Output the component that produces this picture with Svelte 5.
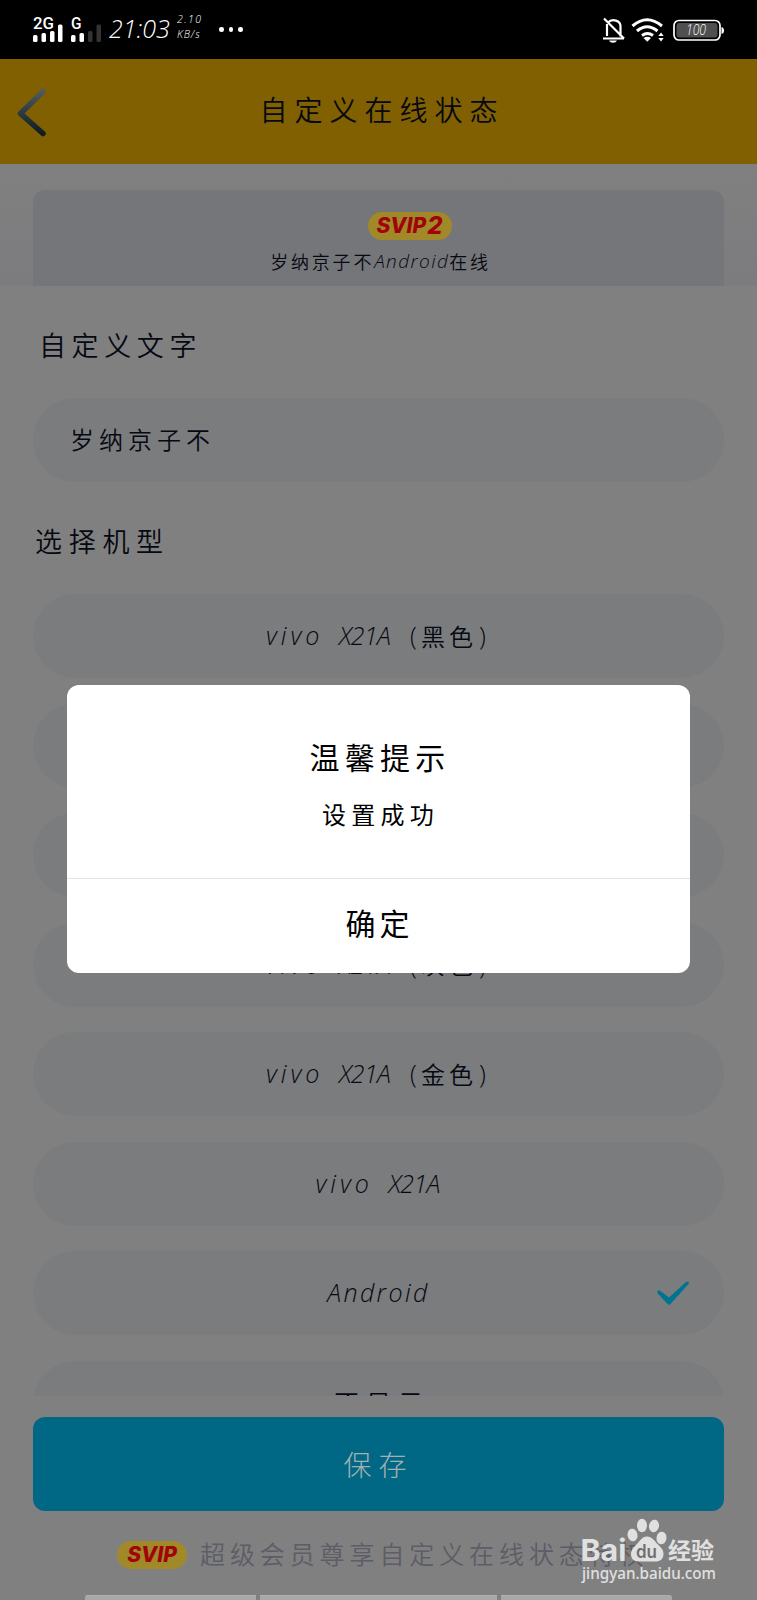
<script>
  const models = [
    { name: 'vivo X21A', color: '黑色' },
    { name: 'vivo X21A' , hidden: true },
    { name: 'vivo X21A' , hidden: true },
    { name: 'vivo X21A', color: '灰色' },
    { name: 'vivo X21A', color: '金色' },
    { name: 'vivo X21A' },
    { name: 'Android', checked: true },
    { label: '不显示' }
  ];
</script>

<div class="screen">
  <div class="status">
    <svg class="signals" width="72" height="28" viewBox="0 0 72 28">
      <g fill="#fff" font-family="Roboto" font-weight="500" font-size="16" font-style="normal">
        <text x="0" y="13" textLength="21" lengthAdjust="spacingAndGlyphs">2G</text>
        <text x="38" y="13" textLength="10.5" lengthAdjust="spacingAndGlyphs">G</text>
        <rect x="0" y="19" width="4.5" height="7" rx="1.5" />
        <rect x="8.5" y="17" width="4.5" height="9" rx="1.5" />
        <rect x="17" y="15" width="4.5" height="11" rx="1.5" />
        <rect x="25" y="8.5" width="4.5" height="17.5" rx="1.5" />
        <rect x="38" y="19" width="4.5" height="7" rx="1.5" />
        <rect x="46.500" y="17" width="4.500" height="9" rx="1.5" />
      </g>
      <rect x="55" y="15" width="4.500" height="11" rx="1.5" fill="#333" />
      <rect x="63.500" y="8.5" width="4.500" height="17.500" rx="1.5" fill="#333" />
    </svg>
    <span class="clock">21:03</span>
    <span class="speed"><span>2.10</span><span>KB/s</span></span>
    <span class="dots"><i></i><i></i><i></i></span>
    <svg class="right-icons" width="124" height="28" viewBox="602 15 124 28" fill="none" stroke="#fff">
      <path d="M608 21.500a7 6 0 0 1 12.500 4v10M607 23v12M603 37.500h21M604 17.500l20 20" stroke-width="2.200" />
      <path d="M609 39.500h8q-1 2.200-4 2.200t-4-2.200z" fill="#fff" stroke="none" />
      <path d="M632.500 25q14.500-12.500 29.500 0M637 30q10-8.500 20.500 0M642 34.500q5.500-4 11 0" stroke-width="3" />
      <path d="M643.500 37q4-2.500 7.500 0l-3.700 3.700z" fill="#fff" stroke="none" />
      <path d="M658.300 35l2.700-3.500 2.700 3.500zM658.300 37h5.400l-2.700 3.500z" fill="#fff" stroke="none" />
      <rect x="674" y="19.500" width="46" height="19.500" rx="5" stroke-width="1.700" />
      <rect x="676.500" y="22" width="41" height="14.500" rx="3" fill="#505050" stroke="none" />
      <path d="M721.500 26q2.500.5 2.500 3.500t-2.500 3.500z" fill="#fff" stroke="none" />
      <text x="686" y="33.500" fill="#fff" stroke="none" font-family="Open Sans" font-style="italic" font-size="14" textLength="20" lengthAdjust="spacingAndGlyphs">100</text>
    </svg>
  </div>

  <header>
    <svg class="back" width="32" height="50" viewBox="0 0 32 50" fill="none">
      <defs>
        <linearGradient id="chev" x1="0" y1="0" x2="0" y2="1">
          <stop offset="0" stop-color="#525a5b" />
          <stop offset="0.5" stop-color="#2c3a42" />
          <stop offset="1" stop-color="#101c20" />
        </linearGradient>
      </defs>
      <path d="M27 3.500L4.500 25.500l22.500 20" stroke="url(#chev)" stroke-width="5.500" stroke-linecap="round" stroke-linejoin="round" />
    </svg>
    <h1>自定义在线状态</h1>
  </header>

  <section class="preview">
    <div class="card">
      <div class="badge two">SVIP<b>2</b></div>
      <p>岁纳京子不<em>Android</em>在线</p>
    </div>
  </section>

  <main>
    <h2 class="first">自定义文字</h2>
    <div class="pill field">岁纳京子不</div>
    <h2 class="second">选择机型</h2>
    <div class="list">
      {#each models as m}
        <div class="pill">
          {#if m.label}
            <span class="cjk wide">{m.label}</span>
          {:else if m.name === 'Android'}
            <span class="android">{m.name}</span>
          {:else if !m.hidden}
            <span class="vivo">vivo</span><span class="x">X21A</span>
            {#if m.color}<span class="paren">(</span><span class="cjk">{m.color}</span><span class="paren end">)</span>{/if}
          {/if}
          {#if m.checked}
            <svg class="check" width="34" height="26" viewBox="0 0 34 26">
              <path d="M1.200 10.500Q2.500 8.500 4.500 10L13 16.500 30 1Q33-.5 33 2.500L14.500 23Q13 24.500 11.500 23L1.700 12.500Z" fill="#007391" />
            </svg>
          {/if}
        </div>
      {/each}
    </div>
  </main>

  <button class="save">保存</button>
  <div class="foot">
    <div class="badge">SVIP</div>
    <span>超级会员尊享自定义在线状态特权</span>
  </div>
  <div class="strip"><i></i><i></i><i></i></div>

  <div class="dialog">
    <div class="body">
      <h3>温馨提示</h3>
      <p>设置成功</p>
    </div>
    <div class="ok">确定</div>
  </div>

  <svg class="mark" width="140" height="70" viewBox="580 1516 140 70" fill="#e0e0e0">
    <text x="580.500" y="1561" font-family="Inter" font-weight="700" font-size="30" textLength="46" lengthAdjust="spacingAndGlyphs">Bai</text>
    <ellipse cx="632.500" cy="1535" rx="5" ry="6.300" transform="rotate(-10 632.500 1535)" />
    <ellipse cx="642" cy="1525.500" rx="5" ry="6.700" />
    <ellipse cx="654" cy="1526" rx="5" ry="6.300" transform="rotate(12 654 1526)" />
    <ellipse cx="661.500" cy="1538" rx="5" ry="6.300" transform="rotate(8 661.500 1538)" />
    <path d="M647 1536.500c5 0 7 4 10.500 7.500s6 5.500 6 10c0 5-3.500 7.500-8 7.500h-17c-5 0-7.500-3-7.500-7.500s3-7 6-10 5-7.500 10-7.500z" />
    <text x="636" y="1558" fill="#707070" font-family="Inter" font-weight="600" font-size="18" textLength="21" lengthAdjust="spacingAndGlyphs">du</text>
    <text x="668" y="1559" font-family="Noto Sans CJK SC" font-weight="700" font-size="23" textLength="46">经验</text>
    <text x="582" y="1579" font-family="Noto Sans" font-weight="500" font-size="15.500" textLength="134" lengthAdjust="spacingAndGlyphs">jingyan.baidu.com</text>
  </svg>
</div>

<style>
  :global(body) { background: #808080; overflow: hidden; }
  .screen {
    position: relative;
    width: 757px;
    height: 1600px;
    overflow: hidden;
    display: flex;
    flex-direction: column;
    background: #808080;
    color: #060812;
    font-family: "Noto Sans CJK SC", sans-serif;
    font-weight: 350;
    white-space: nowrap;
  }
  .screen * { box-sizing: border-box; }
  h1, h2, h3, p { margin: 0; font-weight: inherit; }

  .status {
    flex: none;
    height: 59px;
    background: #000;
    color: #fff;
    display: flex;
    align-items: center;
    padding-left: 33px;
    font-family: "Open Sans", sans-serif;
    font-style: italic;
  }
  .signals { flex: none; }
  .clock { width: 68px; margin-left: 4px; font-size: 25px; line-height: 30px; margin-top: -4px; }
  .speed { width: 43px; display: flex; flex-direction: column; font-size: 10.500px; line-height: 15px; margin-top: -5px; }
  .speed span:first-child { letter-spacing: 1.400px; }
  .speed span:last-child { letter-spacing: 0.900px; }
  .dots { display: flex; gap: 5px; margin-left: -1px; }
  .dots i { width: 4.500px; height: 4.500px; border-radius: 50%; background: #fff; }
  .right-icons { margin-left: auto; margin-right: 31px; }

  header {
    flex: none;
    height: 105px;
    background: #806000;
    display: grid;
    grid-template-columns: 60px 1fr 60px;
    align-items: center;
  }
  .back { margin-left: 16px; margin-top: 2px; }
  h1 { justify-self: center; font-size: 28px; line-height: 40px; letter-spacing: 7px; margin: -6px -7px 0 0; }

  .preview { flex: none; height: 122px; padding: 26px 33px 0; background: linear-gradient(#808080, #7c7c7f); }
  .card {
    height: 96px;
    background: #757679;
    border-radius: 12px 12px 0 0;
    display: flex;
    flex-direction: column;
    align-items: center;
    padding-top: 22px;
  }
  .badge {
    flex: none;
    width: 70px;
    height: 28px;
    border-radius: 14px;
    background: #a18829;
    color: #a00408;
    display: flex;
    align-items: center;
    justify-content: center;
    font: italic 800 21px/28px Inter, sans-serif;
    letter-spacing: 0;
  }
  .badge.two { width: 84px; margin-left: 62px; }
  .badge b { font-size: 24px; font-weight: 800; margin-left: 1px; }
  .card p { font-size: 18px; line-height: 24px; letter-spacing: 2.800px; margin: 9px -4px 0 0; display: flex; align-items: center; }
  .card em { font: italic 300 19px/24px "Open Sans", sans-serif; letter-spacing: 1.400px; }

  main { flex: none; height: 1109.500px; padding: 0 33px; overflow: hidden; }
  h2 { height: 40px; line-height: 40px; font-size: 27px; }
  .first { margin: 39px 0 33px 6px; letter-spacing: 5.600px; }
  .second { margin: 39px 0 33px 2px; letter-spacing: 6.700px; }
  .list { display: flex; flex-direction: column; gap: 25.500px; }
  .pill {
    flex: none;
    position: relative;
    height: 84px;
    border-radius: 42px;
    background: #7b7c7e;
    display: flex;
    align-items: center;
    justify-content: center;
    font-size: 25px;
    padding-bottom: 2px;
  }
  .pill.field { justify-content: flex-start; padding: 0 0 3px 37px; font-size: 24px; letter-spacing: 5px; }
  .vivo, .x, .android, .paren { font-family: "Open Sans", sans-serif; font-style: italic; font-size: 25px; }
  .vivo { width: 57px; letter-spacing: 4px; margin: 0 16px 0 -1px; }
  .x { width: 52px; letter-spacing: -0.700px; }
  .android { font-size: 25px; letter-spacing: 2.400px; }
  .paren { margin-left: 19px; font-style: normal; width: 11px; }
  .paren.end { margin-left: 2px; }
  .cjk { letter-spacing: 4px; font-size: 24px; }
  .cjk.wide { letter-spacing: 7px; font-size: 25px; margin-right: -7px; }
  .check { position: absolute; right: 34px; top: 30px; }

  .save {
    flex: none;
    margin: 21.500px 33px 0;
    height: 94px;
    border: 0;
    border-radius: 12px;
    background: #006884;
    color: #a3b0b3;
    font: 300 28px/94px "Noto Sans CJK SC", sans-serif;
    letter-spacing: 7px;
    padding: 0;
  }
  .foot { flex: none; height: 84px; padding: 0 0 0 117px; display: flex; align-items: center; color: #5c5d66; }
  .foot .badge { margin-top: 3px; }
  .foot span { margin: -1px 0 0 13px; font-size: 25px; letter-spacing: 4.900px; }
  .strip { display: grid; grid-template-columns: 171px 237px 171px; gap: 4px; height: 5px; padding-left: 85px; }
  .strip i { background: #a8a8a8; border-top: 1px solid #b0b0b0; }
  .strip i:first-child { border-top-left-radius: 3px; }
  .strip i:last-child { border-top-right-radius: 3px; }

  .dialog {
    position: absolute;
    left: 67px;
    top: 685px;
    width: 623px;
    height: 288px;
    border-radius: 12px;
    background: #fff;
    color: #000;
    text-align: center;
    font-weight: 400;
  }
  .body { height: 194px; border-bottom: 1px solid #e3e3e3; padding-top: 49px; }
  h3 { font-size: 30px; line-height: 44px; letter-spacing: 5.200px; margin-right: -3px; }
  .body p { font-size: 24px; line-height: 36px; letter-spacing: 5.200px; margin: 18px -4px 0 0; }
  .ok { font-size: 30px; line-height: 86px; letter-spacing: 4px; margin-right: -2px; }
  .mark { position: absolute; left: 580px; top: 1516px; }
</style>
